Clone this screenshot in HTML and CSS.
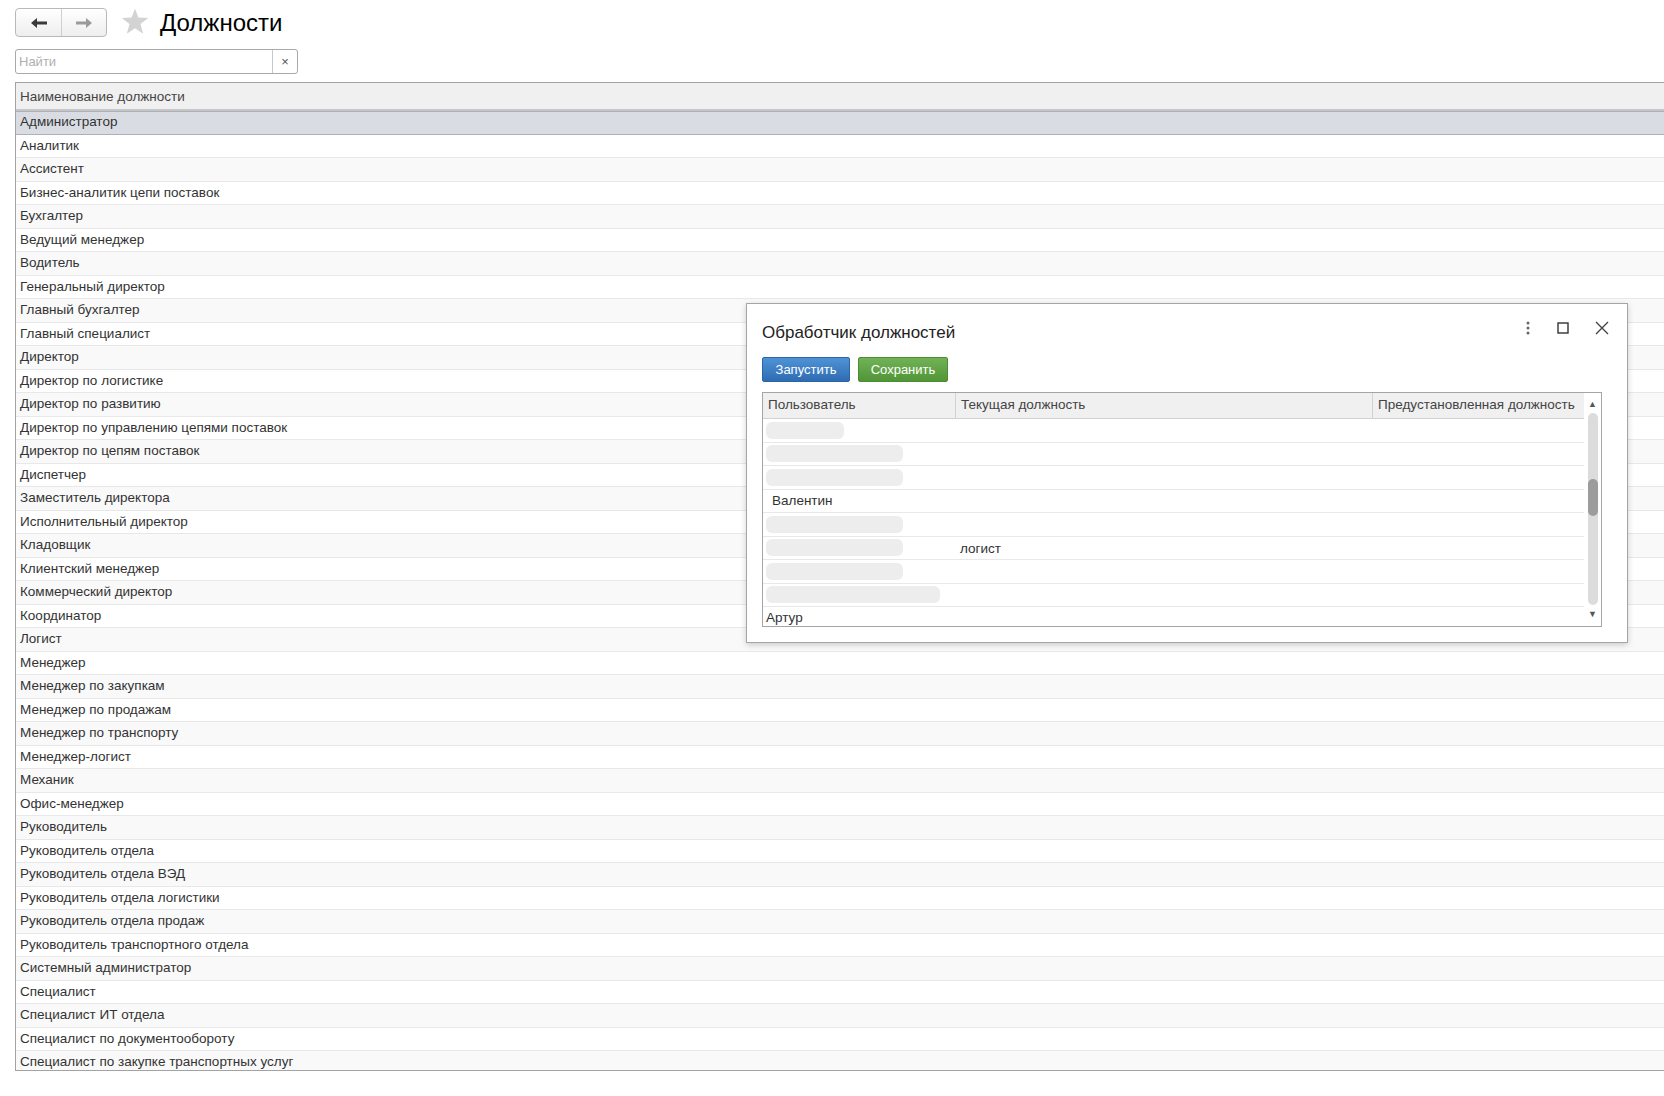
FILE: index.html
```html
<!DOCTYPE html>
<html lang="ru">
<head>
  <meta charset="UTF-8" />
  <title>Должности</title>
  <link rel="stylesheet" href="styles.css">
</head>
<body>
  <div class="top">
    <div class="nav">
      <button class="nav-btn">
        <svg width="18" height="12" viewBox="0 0 18 12"><path d="M1 6 L7 1 L7 4.5 L17 4.5 L17 7.5 L7 7.5 L7 11 Z" fill="#3a3a3a"/></svg>
      </button>
      <button class="nav-btn">
        <svg width="18" height="12" viewBox="0 0 18 12"><path d="M17 6 L11 1 L11 4.5 L1 4.5 L1 7.5 L11 7.5 L11 11 Z" fill="#9a9a9a"/></svg>
      </button>
    </div>
    <svg class="star" width="28" height="27" viewBox="0 0 28 27"><path d="M14 0.5 L17.4 9.6 L27.2 10 L19.5 16.1 L22.2 25.8 L14 20.3 L5.8 25.8 L8.5 16.1 L0.8 10 L10.6 9.6 Z" fill="#d3d3d3"/></svg>
    <h1 class="title">Должности</h1>
  </div>

  <div class="search">
    <input class="search-input" type="text" placeholder="Найти">
    <span class="search-clear">×</span>
  </div>

  <div class="list">
    <div class="list-head">Наименование должности</div>
    <div class="list-body" id="rows"></div>
  </div>

  <div class="dialog">
    <div class="dialog-head">
      <div class="dialog-title">Обработчик должностей</div>
      <div class="dialog-tools">
        <svg width="6" height="14" viewBox="0 0 6 14"><circle cx="3" cy="2" r="1.5" fill="#666"/><circle cx="3" cy="7" r="1.5" fill="#666"/><circle cx="3" cy="12" r="1.5" fill="#666"/></svg>
        <svg width="12" height="12" viewBox="0 0 12 12"><rect x="1" y="1" width="10" height="10" fill="none" stroke="#333" stroke-width="1.4"/></svg>
        <svg width="14" height="14" viewBox="0 0 14 14"><path d="M1 1 L13 13 M13 1 L1 13" stroke="#444" stroke-width="1.4"/></svg>
      </div>
    </div>
    <div class="dialog-buttons">
      <button class="btn btn-blue">Запустить</button>
      <button class="btn btn-green">Сохранить</button>
    </div>
    <div class="grid">
      <div class="grid-main">
        <div class="grid-head">
          <div class="col c1">Пользователь</div>
          <div class="col c2">Текущая должность</div>
          <div class="col c3">Предустановленная должность</div>
        </div>
        <div class="grid-row"><div class="col c1"><span class="skel" style="width:78px"></span></div><div class="col c2"></div><div class="col c3"></div></div>
        <div class="grid-row"><div class="col c1"><span class="skel" style="width:137px"></span></div><div class="col c2"></div><div class="col c3"></div></div>
        <div class="grid-row"><div class="col c1"><span class="skel" style="width:137px"></span></div><div class="col c2"></div><div class="col c3"></div></div>
        <div class="grid-row"><div class="col c1 name">Валентин</div><div class="col c2"></div><div class="col c3"></div></div>
        <div class="grid-row"><div class="col c1"><span class="skel" style="width:137px"></span></div><div class="col c2"></div><div class="col c3"></div></div>
        <div class="grid-row"><div class="col c1"><span class="skel" style="width:137px"></span></div><div class="col c2">логист</div><div class="col c3"></div></div>
        <div class="grid-row"><div class="col c1"><span class="skel" style="width:137px"></span></div><div class="col c2"></div><div class="col c3"></div></div>
        <div class="grid-row"><div class="col c1"><span class="skel" style="width:174px"></span></div><div class="col c2"></div><div class="col c3"></div></div>
        <div class="grid-row"><div class="col c1">Артур</div><div class="col c2"></div><div class="col c3"></div></div>
      </div>
      <div class="scroll">
        <span class="arrow">▲</span>
        <div class="track"><div class="thumb"></div></div>
        <span class="arrow">▼</span>
      </div>
    </div>
  </div>

  <script>
    const names = [
      'Администратор', 'Аналитик', 'Ассистент', 'Бизнес-аналитик цепи поставок', 'Бухгалтер',
      'Ведущий менеджер', 'Водитель', 'Генеральный директор', 'Главный бухгалтер', 'Главный специалист',
      'Директор', 'Директор по логистике', 'Директор по развитию', 'Директор по управлению цепями поставок',
      'Директор по цепям поставок', 'Диспетчер', 'Заместитель директора', 'Исполнительный директор',
      'Кладовщик', 'Клиентский менеджер', 'Коммерческий директор', 'Координатор', 'Логист', 'Менеджер',
      'Менеджер по закупкам', 'Менеджер по продажам', 'Менеджер по транспорту', 'Менеджер-логист',
      'Механик', 'Офис-менеджер', 'Руководитель', 'Руководитель отдела', 'Руководитель отдела ВЭД',
      'Руководитель отдела логистики', 'Руководитель отдела продаж', 'Руководитель транспортного отдела',
      'Системный администратор', 'Специалист', 'Специалист ИТ отдела', 'Специалист по документообороту',
      'Специалист по закупке транспортных услуг'
    ];
    document.getElementById('rows').innerHTML = names
      .map((n, i) => `<div class="row${i === 0 ? ' selected' : ''}">${n}</div>`)
      .join('');
  </script>
</body>
</html>
```

FILE: styles.css
```css
body {
  margin: 0;
  font-family: 'Liberation Sans', Arial, sans-serif;
  color: #333;
  background: #fff;
  overflow: hidden;
  width: 1664px;
  height: 1096px;
}

.top {
  display: flex;
  align-items: center;
  padding: 8px 0 0 15px;
  height: 29px;
}

.nav {
  display: flex;
  height: 29px;
  border: 1px solid #b9b9b9;
  border-radius: 4px;
  box-sizing: border-box;
  background: linear-gradient(#ffffff, #eeeeee);
}

.nav-btn {
  width: 45px;
  height: 27px;
  border: none;
  background: transparent;
  padding: 0;
  display: flex;
  align-items: center;
  justify-content: center;
}
.nav-btn + .nav-btn {
  border-left: 1px solid #cfcfcf;
}

.star {
  margin-left: 14px;
  margin-top: -2px;
}

.title {
  margin: 1px 0 0 11px;
  font-size: 24px;
  font-weight: normal;
  color: #000;
}

.search {
  display: flex;
  margin: 12px 0 0 15px;
  width: 283px;
  height: 25px;
  border: 1px solid #a9a9a9;
  border-radius: 3px;
  box-sizing: border-box;
}

.search-input {
  flex: 1;
  border: none;
  outline: none;
  padding: 0 3px;
  font-family: 'Liberation Sans', Arial, sans-serif;
  font-size: 13px;
  background: transparent;
}
.search-input::placeholder {
  color: #b0b0b0;
}

.search-clear {
  width: 24px;
  border-left: 1px solid #c8c8c8;
  display: flex;
  align-items: center;
  justify-content: center;
  font-size: 13px;
  color: #555;
}

.list {
  margin: 8px 0 0 15px;
  height: 989px;
  border: 1px solid #a3a3a3;
  border-right: none;
  box-sizing: border-box;
  overflow: hidden;
  font-size: 13.5px;
}

.list-head {
  height: 26px;
  line-height: 27px;
  padding-left: 4px;
  background: #f0f0f0;
  border-bottom: 2px solid #c6c6c6;
  color: #444;
}

.row {
  height: 23.5px;
  line-height: 22px;
  padding-left: 4px;
  border-bottom: 1px solid #e8e8e8;
  box-sizing: border-box;
  color: #333;
}
.row:nth-child(odd) {
  background: #f9f9f9;
}
.row.selected {
  background: #d9dde3;
  border-top: 1px solid #abb1ba;
  border-bottom: 1px solid #abb1ba;
  line-height: 20px;
}

.dialog {
  position: absolute;
  left: 746px;
  top: 303px;
  width: 882px;
  height: 340px;
  box-sizing: border-box;
  background: #fff;
  border: 1px solid #a5a5a5;
  box-shadow: 0 2px 6px rgba(0, 0, 0, 0.18);
  padding: 0 0 0 15px;
}

.dialog-head {
  display: flex;
  justify-content: space-between;
  align-items: center;
  height: 53px;
  padding-right: 18px;
}

.dialog-title {
  font-size: 17px;
  color: #222;
  padding-top: 5px;
}

.dialog-tools {
  display: flex;
  align-items: center;
  gap: 26px;
  margin-top: -6px;
}

.dialog-buttons {
  display: flex;
  gap: 8px;
  height: 25px;
}

.btn {
  height: 25px;
  padding: 0;
  border-radius: 2px;
  font-family: 'Liberation Sans', Arial, sans-serif;
  font-size: 13px;
  color: #fff;
  border: 1px solid;
}
.btn-blue {
  width: 88px;
  background: linear-gradient(#4f93d6, #2f6cb3);
  border-color: #2c64a6;
}
.btn-green {
  width: 90px;
  background: linear-gradient(#72b257, #509536);
  border-color: #4c8c34;
}

.grid {
  display: flex;
  margin-top: 10px;
  width: 840px;
  height: 235px;
  border: 1px solid #a5a5a5;
  box-sizing: border-box;
  overflow: hidden;
  font-size: 13.5px;
}

.grid-main {
  flex: 1;
}

.grid-head {
  display: flex;
  height: 25px;
  line-height: 24px;
  background: #f0f0f0;
  border-bottom: 1px solid #d2d2d2;
  color: #444;
}
.grid-head .col + .col {
  border-left: 1px solid #d2d2d2;
}

.col {
  padding-left: 5px;
  box-sizing: border-box;
  white-space: nowrap;
  overflow: hidden;
}
.c1 { width: 192px; }
.c2 { width: 417px; }
.c3 { width: 212px; }

.grid-row {
  display: flex;
  height: 23.5px;
  line-height: 24px;
  border-bottom: 1px solid #e8e8e8;
  box-sizing: border-box;
  color: #333;
}
.grid-row:first-of-type {
  height: 24px;
}

.grid-row .c1 {
  padding-left: 3px;
  display: flex;
  align-items: center;
}
.grid-row .name {
  padding-left: 9px;
}

.skel {
  display: block;
  height: 17px;
  border-radius: 6px;
  background: #ededed;
}

.scroll {
  width: 18px;
  display: flex;
  flex-direction: column;
  align-items: center;
  padding: 5px 0 6px;
  box-sizing: border-box;
}

.arrow {
  font-size: 9px;
  color: #555;
  line-height: 12px;
}

.track {
  flex: 1;
  width: 10px;
  margin: 3px 0;
  border-radius: 5px;
  background: #dcdcdc;
  padding-top: 66px;
  box-sizing: border-box;
}

.thumb {
  height: 37px;
  border-radius: 5px;
  background: #9c9c9c;
}
```
